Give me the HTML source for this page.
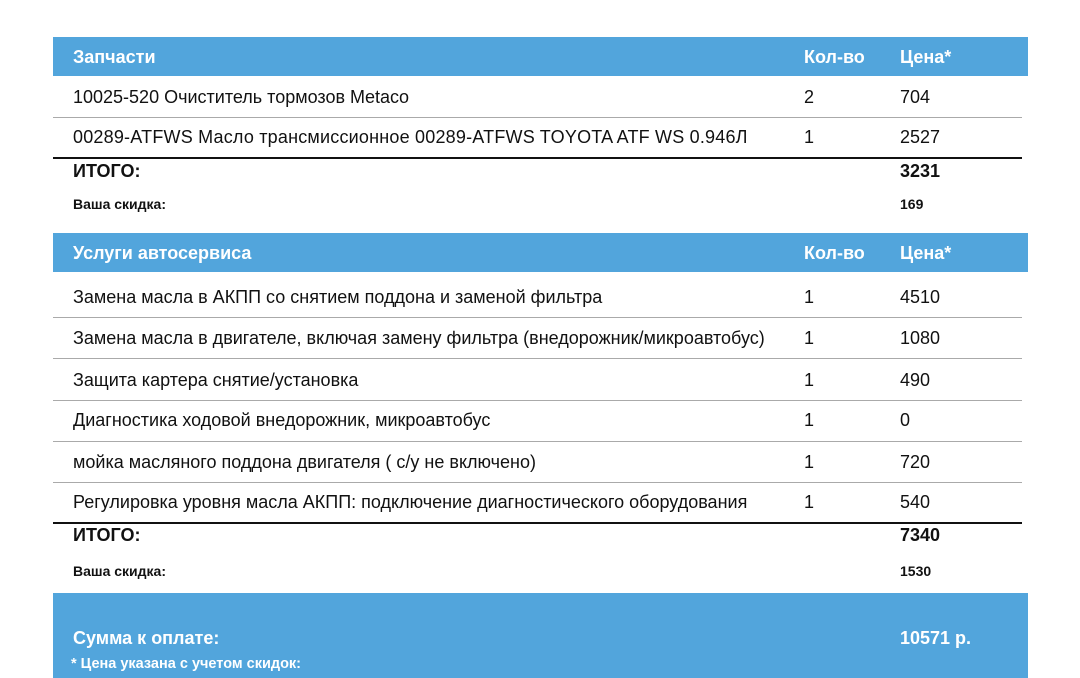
<!DOCTYPE html>
<html><head><meta charset="utf-8"><style>
body{margin:0;width:1080px;height:678px;background:#fff;font-family:"Liberation Sans",sans-serif;position:relative;overflow:hidden;color:#111}
.h{position:absolute;left:53px;width:975px;height:39px;background:#52a5dc}
.t{position:absolute;white-space:nowrap;line-height:20px;font-size:18px}
.w{color:#fff;font-weight:bold}
.b{font-weight:bold}
.s{font-size:14px}
.l{position:absolute;left:53px;width:969px;height:1px;background:#aaa}
.k{position:absolute;left:53px;width:969px;height:2px;background:#111}
</style></head><body>
<div class="h" style="top:37px"></div>
<div class="t w" style="left:73px;top:47px">Запчасти</div>
<div class="t w" style="left:804px;top:47px">Кол-во</div>
<div class="t w" style="left:900px;top:47px">Цена*</div>
<div class="t" style="left:73px;top:87px">10025-520 Очиститель тормозов Metaco</div>
<div class="t" style="left:804px;top:87px">2</div><div class="t" style="left:900px;top:87px">704</div>
<div class="l" style="top:117px"></div>
<div class="t" style="left:73px;top:127px;letter-spacing:0.2px">00289-ATFWS Масло трансмиссионное 00289-ATFWS TOYOTA ATF WS 0.946Л</div>
<div class="t" style="left:804px;top:127px">1</div><div class="t" style="left:900px;top:127px">2527</div>
<div class="k" style="top:157px"></div>
<div class="t b" style="left:73px;top:161px">ИТОГО:</div><div class="t b" style="left:900px;top:161px">3231</div>
<div class="t b s" style="left:73px;top:194px">Ваша скидка:</div><div class="t b s" style="left:900px;top:194px">169</div>

<div class="h" style="top:233px"></div>
<div class="t w" style="left:73px;top:243px">Услуги автосервиса</div>
<div class="t w" style="left:804px;top:243px">Кол-во</div>
<div class="t w" style="left:900px;top:243px">Цена*</div>
<div class="t" style="left:73px;top:287px">Замена масла в АКПП со снятием поддона и заменой фильтра</div>
<div class="t" style="left:804px;top:287px">1</div><div class="t" style="left:900px;top:287px">4510</div>
<div class="l" style="top:317px"></div>
<div class="t" style="left:73px;top:328px">Замена масла в двигателе, включая замену фильтра (внедорожник/микроавтобус)</div>
<div class="t" style="left:804px;top:328px">1</div><div class="t" style="left:900px;top:328px">1080</div>
<div class="l" style="top:358px"></div>
<div class="t" style="left:73px;top:370px">Защита картера снятие/установка</div>
<div class="t" style="left:804px;top:370px">1</div><div class="t" style="left:900px;top:370px">490</div>
<div class="l" style="top:400px"></div>
<div class="t" style="left:73px;top:410px">Диагностика ходовой внедорожник, микроавтобус</div>
<div class="t" style="left:804px;top:410px">1</div><div class="t" style="left:900px;top:410px">0</div>
<div class="l" style="top:441px"></div>
<div class="t" style="left:73px;top:452px">мойка масляного поддона двигателя ( с/у не включено)</div>
<div class="t" style="left:804px;top:452px">1</div><div class="t" style="left:900px;top:452px">720</div>
<div class="l" style="top:482px"></div>
<div class="t" style="left:73px;top:492px">Регулировка уровня масла АКПП: подключение диагностического оборудования</div>
<div class="t" style="left:804px;top:492px">1</div><div class="t" style="left:900px;top:492px">540</div>
<div class="k" style="top:522px"></div>
<div class="t b" style="left:73px;top:525px">ИТОГО:</div><div class="t b" style="left:900px;top:525px">7340</div>
<div class="t b s" style="left:73px;top:561px">Ваша скидка:</div><div class="t b s" style="left:900px;top:561px">1530</div>

<div class="h" style="top:593px;height:85px"></div>
<div class="t w" style="left:73px;top:628px;font-size:18px">Сумма к оплате:</div>
<div class="t w" style="left:900px;top:628px;font-size:18px">10571 р.</div>
<div class="t w" style="left:71px;top:654px;font-size:14.5px">* Цена указана с учетом скидок:</div>
</body></html>
